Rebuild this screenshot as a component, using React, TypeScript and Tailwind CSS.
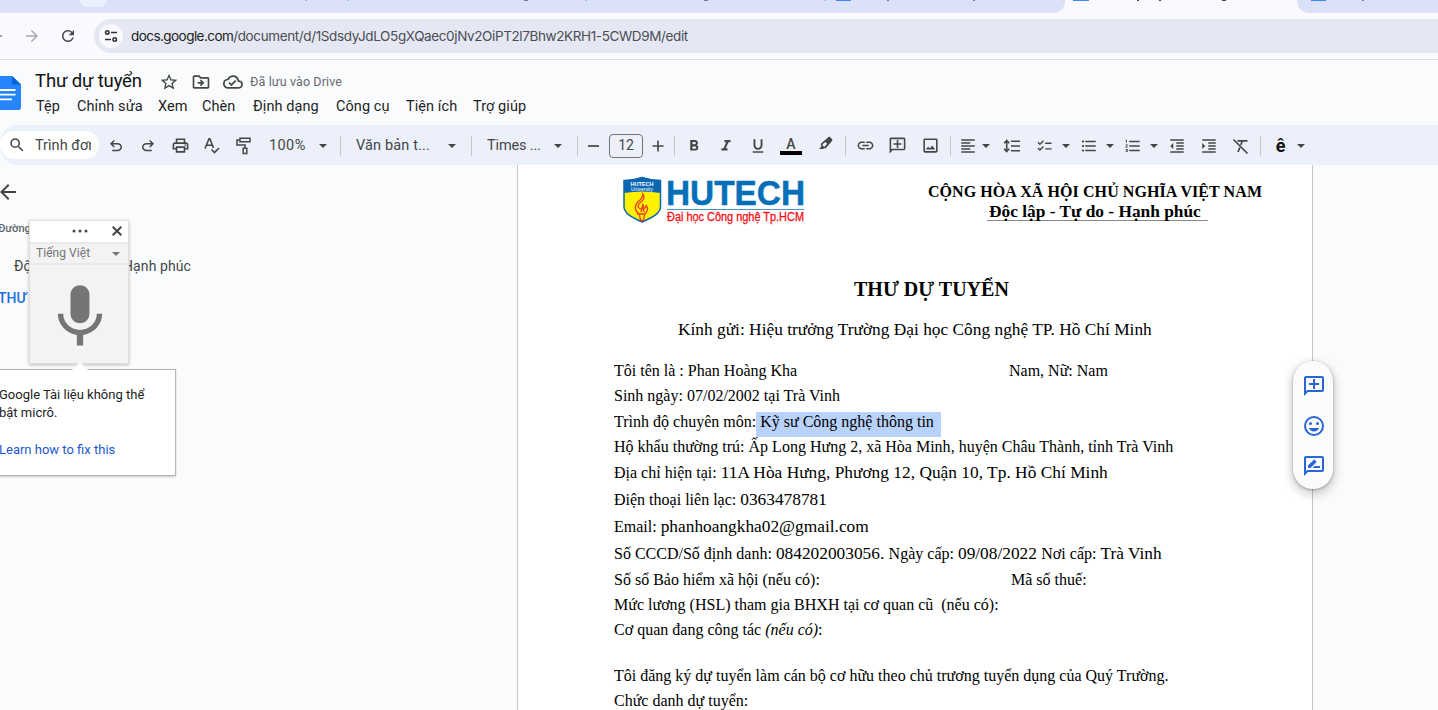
import React from "react";
import {
  MdStarBorder,
  MdOutlineDriveFileMove,
  MdOutlineCloudDone,
  MdSearch,
  MdOutlinePrint,
  MdFormatBold,
  MdFormatItalic,
  MdFormatUnderlined,
  MdLink,
  MdOutlineAddComment,
  MdOutlineImage,
  MdFormatAlignLeft,
  MdChecklist,
  MdFormatListBulleted,
  MdFormatListNumbered,
  MdFormatIndentDecrease,
  MdFormatIndentIncrease,
  MdArrowBack,
  MdArrowForward,
  MdRefresh,
  MdMic,
  MdOutlineRateReview,
} from "react-icons/md";

type Kids = { children?: React.ReactNode };

const Cell = ({ children, w = "w-8" }: Kids & { w?: string }) => (
  <div className={`flex h-8 shrink-0 items-center justify-center ${w}`}>{children}</div>
);

const Divider = () => <div className="h-5 w-px shrink-0 bg-[#c7c7c7]" />;

const Caret = ({ className = "" }: { className?: string }) => (
  <svg className={`shrink-0 ${className}`} width="8" height="4" viewBox="0 0 8 4" fill="currentColor">
    <path d="M0 0h8L4 4z" />
  </svg>
);

const Undo = ({ flip = false }: { flip?: boolean }) => (
  <svg width="18" height="18" viewBox="0 -960 960 960" fill="currentColor" className={flip ? "-scale-x-100" : ""}>
    <path d="M280-200v-80h284q63 0 109.5-40T720-420q0-60-46.5-100T564-560H312l104 104-56 56-200-200 200-200 56 56-104 104h252q97 0 166.5 63T800-420q0 94-69.5 157T564-200H280Z" />
  </svg>
);

const Spell = () => (
  <svg width="18" height="18" viewBox="0 0 18 18" fill="none" stroke="currentColor" strokeWidth="1.6">
    <path d="M2 11.500 6 1.800h.8L10.500 11M3.500 8.200h5.800M8.500 12.500l3 3 4.500-4.500" />
  </svg>
);

const Roller = () => (
  <svg width="18" height="18" viewBox="0 0 18 18" fill="none" stroke="currentColor" strokeWidth="1.5">
    <path d="M5 1.200h10v3.600H5zM5 3H2v5h8v3M8.200 11.200h3.600v5.300H8.200z" />
  </svg>
);

const Pen = () => (
  <svg width="16" height="16" viewBox="0 0 16 16">
    <path fill="currentColor" fillRule="evenodd" d="m3.3 7.2 7-6c.6-.5 1.300-.5 1.900.1l1.700 1.700c.6.6.6 1.300.1 1.900l-6 7c-.5.6-1.300.7-1.900.2l-.7.9H1l2.500-2.600c-.9-1-1-2.400-.2-3.200Zm1.300 1.100c-.4.400-.3.800 0 1.100l1.200 1.200c.3.3.7.3 1 0l2.400-2.800-1.900-1.900-2.700 2.400Z" />
  </svg>
);

const Spacing = () => (
  <svg width="18" height="18" viewBox="0 0 18 18" fill="none" stroke="currentColor" strokeWidth="1.6">
    <path d="M8 4.300h9M8 9h9M8 13.700h9M3.700 4v10M1.200 6.200l2.500-2.700 2.500 2.700M1.200 11.800l2.500 2.700 2.500-2.700" />
  </svg>
);

const ClearFormat = () => (
  <svg width="18" height="18" viewBox="0 0 18 18" fill="none" stroke="currentColor" strokeWidth="1.700">
    <path d="M1.500 2.500 15.500 16.500M5.500 3.800h10M10.300 4 8.800 8M7.800 10.500 6 15" />
  </svg>
);

const Smile = () => (
  <svg width="24" height="24" viewBox="0 0 24 24" fill="currentColor">
    <circle cx="12" cy="12" r="9" fill="none" stroke="currentColor" strokeWidth="2" />
    <circle cx="8.500" cy="9.500" r="1.500" />
    <circle cx="15.500" cy="9.500" r="1.500" />
    <path d="M7 14h10c-.8 2-2.700 3.500-5 3.500S7.800 16 7 14Z" />
  </svg>
);

const Tabs = () => (
  <div className="flex h-[13px] shrink-0 bg-[#faf9ff]">
    <div className="flex w-[1065px] items-start overflow-hidden rounded-br-xl bg-[#dae1f9]">
      <div className="ml-20 h-[7px] w-[27px] rounded-b-xl bg-[#eceffd]" />
      <div className="ml-[198px] h-px w-[2px] bg-[#a6b5d4]" />
      <div className="ml-[40px] h-px w-[2px] bg-[#9dbcf8]" />
      <div className="ml-[175px] h-px w-[4px] bg-[#737a8e]" />
      <div className="ml-[57px] h-px w-[2px] bg-[#9dbcf8]" />
      <div className="ml-[117px] h-px w-[4px] bg-[#737a8e]" />
      <div className="ml-[116px] h-px w-[2px] bg-[#9dbcf8]" />
      <div className="ml-[10px] h-px w-[15px] bg-[#4285f4]" />
      <div className="ml-[36px] h-px w-[2px] bg-[#737a8e]" />
      <div className="ml-[84px] h-px w-[2px] bg-[#737a8e]" />
    </div>
    <div className="flex w-[232px] items-start">
      <div className="ml-2 h-px w-4 bg-[#4285f4]" />
      <div className="ml-[48px] h-px w-[2px] bg-[#44464f]" />
      <div className="ml-[20px] h-px w-[2px] bg-[#44464f]" />
      <div className="ml-[61px] h-px w-[4px] bg-[#44464f]" />
    </div>
    <div className="flex flex-1 items-start rounded-bl-xl bg-[#dae1f9]">
      <div className="ml-[14px] h-px w-[15px] bg-[#4285f4]" />
      <div className="ml-[36px] h-px w-[2px] bg-[#737a8e]" />
    </div>
  </div>
);

const AddressBar = () => (
  <div className="flex h-[47px] shrink-0 items-center border-b border-[#dcdde8] bg-[#faf9ff] font-[Inter,sans-serif]">
    <div className="h-[1.500px] w-[2px] bg-[#a0a1a8]" />
    <MdArrowForward className="ml-[21px] text-[#a5a6ae]" size={18} />
    <MdRefresh className="ml-[18px] text-[#474a56]" size={18} />
    <div className="ml-[17px] flex h-[34px] flex-1 items-center rounded-l-full bg-[#e5e8f3] pl-[5px]">
      <div className="flex size-6 items-center justify-center rounded-full bg-[#faf9ff]">
        <svg width="14" height="14" viewBox="0 0 14 14" fill="none" stroke="#303238" strokeWidth="1.600">
          <circle cx="3.300" cy="3.500" r="1.700" />
          <circle cx="10.700" cy="10.500" r="1.700" />
          <path d="M7 3.500h6M1 10.500h6" />
        </svg>
      </div>
      <div className="ml-2 w-[600px] whitespace-nowrap text-[13.500px] tracking-[-0.380px] text-[#4b4d54]">
        <span className="tracking-[-0.550px] text-[#1c1d21]">docs.google.com</span>/document/d/1SdsdyJdLO5gXQaec0jNv2OiPT2l7Bhw2KRH1-5CWD9M/edit
      </div>
    </div>
  </div>
);

const Header = () => (
  <div className="flex h-[65px] shrink-0 bg-[#f9fbfd]">
    <svg className="mt-4 shrink-0" width="21" height="34" viewBox="0 0 21 34">
      <path d="M-6 0h18l9 8.500v23a2.500 2.500 0 0 1-2.500 2.500H-6z" fill="#2684fc" />
      <path d="M12 0l9 8.500h-9z" fill="#0066da" />
      <path d="M0 14h15.500M0 18.700h15.500M0 23.400h12" stroke="#fff" strokeWidth="1.800" />
    </svg>
    <div className="ml-[14px] flex flex-col font-[Roboto,sans-serif]">
      <div className="mt-[9px] flex h-[26px] items-center text-[#444746]">
        <span className="w-[124px] whitespace-nowrap text-[18.500px] tracking-[-0.150px] text-[#111]">Thư dự tuyển</span>
        <MdStarBorder size={20} />
        <MdOutlineDriveFileMove className="ml-3" size={20} />
        <MdOutlineCloudDone className="ml-3" size={20} />
        <span className="ml-[7px] pt-px text-[12.500px] tracking-[0.120px] text-[#66696c]">Đã lưu vào Drive</span>
      </div>
      <div className="ml-px flex whitespace-nowrap pt-[2px] text-[14.500px] leading-[20px] tracking-[0.080px] text-[#1f1f1f]">
        <span className="w-[41px]">Tệp</span>
        <span className="w-[81px]">Chỉnh sửa</span>
        <span className="w-[44px]">Xem</span>
        <span className="w-[51px]">Chèn</span>
        <span className="w-[83px]">Định dạng</span>
        <span className="w-[70px]">Công cụ</span>
        <span className="w-[67px]">Tiện ích</span>
        <span>Trợ giúp</span>
      </div>
    </div>
  </div>
);

const Toolbar = () => (
  <div className="flex h-10 shrink-0 items-center whitespace-nowrap rounded-l-[18px] bg-[#ecf0fa] pt-px font-[Roboto,sans-serif] text-[14.500px] text-[#444746]">
    <div className="mb-px flex h-7 w-[99px] shrink-0 items-center rounded-full bg-white pl-2">
      <MdSearch size={18} />
      <span className="ml-[9px] w-[56px] overflow-hidden pt-px">Trình đơn</span>
    </div>
    <div className="mr-px" />
    <Cell><Undo /></Cell>
    <Cell><Undo flip /></Cell>
    <Cell><MdOutlinePrint size={19} /></Cell>
    <Cell><Spell /></Cell>
    <Cell><Roller /></Cell>
    <div className="flex w-20 shrink-0 items-center pl-[9px]">
      <span className="w-[50px] pt-px tracking-[0.400px]">100%</span>
      <Caret />
    </div>
    <Divider />
    <div className="flex w-[130px] shrink-0 items-center pl-[15px]">
      <span className="w-[92px] tracking-[0.150px]">Văn bản t...</span>
      <Caret />
    </div>
    <Divider />
    <div className="flex w-[105px] shrink-0 items-center pl-[15px]">
      <span className="w-[67px] tracking-[-0.150px]">Times ...</span>
      <Caret />
    </div>
    <Divider />
    <Cell w="w-[31px]"><div className="h-[2px] w-[11px] bg-[#5c5f5e]" /></Cell>
    <div className="flex h-6 w-[34px] shrink-0 items-center justify-center rounded border border-[#747775] text-[14px]">12</div>
    <Cell w="w-[31px]">
      <svg className="mr-px" width="12" height="12" viewBox="0 0 12 12" stroke="currentColor" strokeWidth="1.600"><path d="M6 .5v11M.5 6h11" /></svg>
    </Cell>
    <Divider />
    <Cell w="w-[37px]"><MdFormatBold size={18} /></Cell>
    <Cell w="w-7"><MdFormatItalic size={18} /></Cell>
    <Cell w="w-9"><MdFormatUnderlined size={18} /></Cell>
    <Cell w="w-[30px]">
      <div className="flex flex-col items-center">
        <span className="h-[14px] text-[14px] font-medium leading-[14px]">A</span>
        <div className="h-1 w-[22px] bg-black" />
      </div>
    </Cell>
    <Cell w="w-[39px]"><div className="pb-1"><Pen /></div></Cell>
    <Divider />
    <Cell w="w-[38px]"><MdLink size={19} /></Cell>
    <Cell w="w-[26px]"><MdOutlineAddComment size={19} className="-scale-x-100" /></Cell>
    <Cell w="w-10"><MdOutlineImage size={19} /></Cell>
    <Divider />
    <Cell w="w-[34px]"><MdFormatAlignLeft size={18} /></Cell>
    <Cell w="w-[2px]"><Caret /></Cell>
    <Cell w="w-[49px]"><Spacing /></Cell>
    <Cell w="w-[17px]"><MdChecklist size={20} /></Cell>
    <Cell w="w-[25px]"><Caret /></Cell>
    <Cell w="w-[22px]"><MdFormatListBulleted size={18} /></Cell>
    <Cell w="w-5"><Caret /></Cell>
    <Cell w="w-[26px]"><MdFormatListNumbered size={18} /></Cell>
    <Cell w="w-4"><Caret /></Cell>
    <Cell w="w-[30px]"><MdFormatIndentDecrease size={18} /></Cell>
    <Cell w="w-[34px]"><MdFormatIndentIncrease size={18} /></Cell>
    <Cell w="w-[30px]"><ClearFormat /></Cell>
    <Cell w="w-[4px]" />
    <Divider />
    <Cell w="w-[39px]"><span className="text-[18px] font-bold leading-5 text-[#111]">ê</span></Cell>
    <Caret className="-ml-[3px]" />
  </div>
);

const VoicePanel = () => (
  <div className="absolute left-[-9px] top-[55px]">
    <div className="ml-[38px] flex h-[144px] w-[100px] flex-col border border-[#e0e0e0] bg-[#f3f3f3] text-[#757575] shadow-[0_1px_3px_rgba(0,0,0,0.250)]">
      <div className="flex h-[21px] shrink-0 items-center bg-white pb-px pl-[42px] text-[#444]">
        <svg width="16" height="4" viewBox="0 0 16 4" fill="currentColor">
          <circle cx="2" cy="2" r="1.500" /><circle cx="8" cy="2" r="1.500" /><circle cx="14" cy="2" r="1.500" />
        </svg>
        <svg className="ml-[24px]" width="10" height="10" viewBox="0 0 10 10" stroke="currentColor" strokeWidth="2">
          <path d="M.7.7l8.600 8.600M9.300.7.7 9.300" />
        </svg>
      </div>
      <div className="flex h-[23px] shrink-0 items-center border-y-2 border-[#e9e9e9] pl-[6px] text-[12px]">
        <span className="w-[76px] pb-px tracking-[0.050px]">Tiếng Việt</span>
        <Caret />
      </div>
      <div className="flex justify-center pl-[2px] pt-[14px]">
        <MdMic size={76} />
      </div>
    </div>
    <div className="relative mt-[5px] h-[107px] w-[185px] border border-[#b5b5b5] bg-white pl-[7px] pt-4 text-[13px] leading-[18px] text-[#222] shadow-[0_1px_2px_rgba(0,0,0,0.200)]">
      <svg className="absolute left-[80px] top-[-8px]" width="16" height="9" viewBox="0 0 16 9"><path d="M0 8 8 0l8 8v1H0z" fill="#fff" /></svg>
      <p>Google Tài liệu không thể</p>
      <p>bật micrô.</p>
      <p className="mt-[19px] text-[#1d58d2]">Learn how to fix this</p>
    </div>
  </div>
);

const Sidebar = () => (
  <div className="relative w-[517px] shrink-0 font-[Roboto,sans-serif]">
    <MdArrowBack className="ml-[-4px] mt-[15px] text-[#444746]" size={24} />
    <div className="ml-[-2px] mt-[17px] h-4 w-[34px] overflow-hidden whitespace-nowrap text-[11px] font-medium leading-4 text-[#5f6368]">Đường</div>
    <div className="ml-[14px] mt-[19px] flex h-5 text-[14px] leading-5 text-[#444746]">
      <span className="w-[109px]">Độc lập - Tự do -</span>
      <span className="tracking-[0.100px]">Hạnh phúc</span>
    </div>
    <div className="ml-[-2px] mt-3 h-5 text-[14px] font-medium leading-5 text-[#1a6fe0]">THƯ</div>
    <VoicePanel />
  </div>
);

const Logo = () => (
  <svg width="190" height="54" viewBox="620 172 190 54" className="shrink-0">
    <path d="M624 180.500q9 0 18-3 9 3 18.500 3v26c0 7-8 11-18.500 15.500-10-4.500-18-8.500-18-15.500z" fill="#fff200" stroke="#0b67b2" strokeWidth="1.500" />
    <path d="M624 180.500q9 0 18-3 9 3 18.500 3v12.500q-18-3-36.500 0z" fill="#0b67b2" />
    <path d="M643 194c4 7-5 8-5 12 0 4 9 4 8-1 3 4 1 8-2 9h-4c-5-2-6-7-3-11 3-3 6-5 6-9ZM641 212l2-8 1 8M637 214h9M639.500 215l1 5.500h3l1-5.500" fill="none" stroke="#ed3a23" strokeWidth="1.300" />
    <text x="630.500" y="185.500" textLength="23" lengthAdjust="spacingAndGlyphs" fill="#fff" className="font-['Liberation_Sans',sans-serif] text-[5.500px] font-bold">HUTECH</text>
    <text x="631" y="190.500" textLength="22" lengthAdjust="spacingAndGlyphs" fill="#fff" className="font-['Liberation_Sans',sans-serif] text-[5px]">University</text>
    <text x="666" y="205.300" textLength="139" lengthAdjust="spacingAndGlyphs" fill="#0570b8" stroke="#0570b8" strokeWidth=".5" className="font-['Liberation_Sans',sans-serif] text-[35px] font-bold">HUTECH</text>
    <path d="M667 209.500h137" stroke="#4c91c7" />
    <text x="667" y="221" textLength="137" lengthAdjust="spacingAndGlyphs" fill="#f5101a" stroke="#f5101a" strokeWidth=".3" className="font-['Liberation_Sans',sans-serif] text-[12px]">Đại học Công nghệ Tp.HCM</text>
  </svg>
);

const Line = ({ h = "h-[25px]", children }: Kids & { h?: string }) => (
  <p className={`whitespace-pre leading-[25px] tracking-[0.004px] ${h}`}>{children}</p>
);

const Big = ({ children }: Kids) => <span className="text-[17.333px] leading-none">{children}</span>;

const Page = () => (
  <div className="w-[796px] shrink-0 overflow-hidden border-x border-[#c7c7c7] bg-white font-['Liberation_Serif',serif] text-[16px] text-black">
    <div className="flex h-[107px] pl-[102px] pt-[7px]">
      <Logo />
      <div className="ml-[74px] flex w-[410px] flex-col items-center pt-[10px] font-bold">
        <div className="flex w-[410px] justify-center whitespace-nowrap pl-[12px] leading-5 tracking-[0.080px]">CỘNG HÒA XÃ HỘI CHỦ NGHĨA VIỆT NAM</div>
        <div className="ml-[17px] flex h-[19px] w-[221px] items-center whitespace-nowrap border-b border-[#888] pl-[2px] pt-[2px] text-[17.333px] leading-none">Độc lập - Tự do - Hạnh phúc</div>
      </div>
    </div>
    <h1 className="h-[42px] pl-[336px] text-[20px] font-bold leading-[34px]">THƯ DỰ TUYỂN</h1>
    <p className="h-[44px] whitespace-nowrap pl-[160px] text-[17.333px] leading-[32px] tracking-[0.010px]">Kính gửi: Hiệu trưởng Trường Đại học Công nghệ TP. Hồ Chí Minh</p>
    <div className="pl-[96px]">
      <Line><span className="inline-block w-[395px]">Tôi tên là : Phan Hoàng Kha</span>Nam, Nữ: Nam</Line>
      <Line h="h-[26px]">Sinh ngày: 07/02/2002 tại Trà Vinh</Line>
      <Line h="h-[25px] flex">Trình độ chuyên môn:<span className="mt-[3px] h-[25px] w-[185px] bg-[#b9d2fb] leading-[19px]"> Kỹ sư Công nghệ thông tin</span></Line>
      <Line h="h-[26px] relative">Hộ khẩu thường trú: Ấp Long Hưng 2, xã Hòa Minh, huyện Châu Thành, tỉnh Trà Vinh</Line>
      <Line h="h-[27px]">Địa chỉ hiện tại: <Big><span className="tracking-[0.020px]">11A Hòa Hưng, Phương 12, Quận 10, Tp. Hồ Chí Minh</span></Big></Line>
      <Line h="h-[27px]">Điện thoại liên lạc: <Big>0363478781</Big></Line>
      <Line h="h-[27px]">Email: <Big>phanhoangkha02@gmail.com</Big></Line>
      <Line h="h-[26px]">Số CCCD/Số định danh: <Big>084202003056. </Big>Ngày cấp: <Big>09/08/2022 </Big>Nơi cấp: <Big>Trà Vinh</Big></Line>
      <Line><span className="inline-block w-[397px]">Số sổ Bảo hiểm xã hội (nếu có):</span>Mã số thuế:</Line>
      <Line>Mức lương (HSL) tham gia BHXH tại cơ quan cũ  (nếu có):</Line>
      <Line h="h-[46px]">Cơ quan đang công tác <i>(nếu có)</i>:</Line>
      <Line>Tôi đăng ký dự tuyển làm cán bộ cơ hữu theo chủ trương tuyển dụng của Quý Trường.</Line>
      <Line>Chức danh dự tuyển:</Line>
    </div>
  </div>
);

const SideActions = () => (
  <div className="absolute left-[1293px] top-[196px] flex h-32 w-10 flex-col items-center gap-4 rounded-full bg-[#f9fbfd] pl-[2px] pt-[13px] text-[#2b66d4] shadow-[0_1px_3px_rgba(0,0,0,0.300),0_4px_8px_3px_rgba(0,0,0,0.150)]">
    <MdOutlineAddComment size={24} className="-scale-x-100" />
    <Smile />
    <MdOutlineRateReview size={24} />
  </div>
);

export default function App() {
  return (
    <div className="flex h-[710px] w-[1438px] flex-col overflow-hidden bg-[#f9fbfd]">
      <Tabs />
      <AddressBar />
      <Header />
      <Toolbar />
      <div className="relative flex min-h-0 flex-1 overflow-hidden">
        <Sidebar />
        <Page />
        <SideActions />
      </div>
    </div>
  );
}
